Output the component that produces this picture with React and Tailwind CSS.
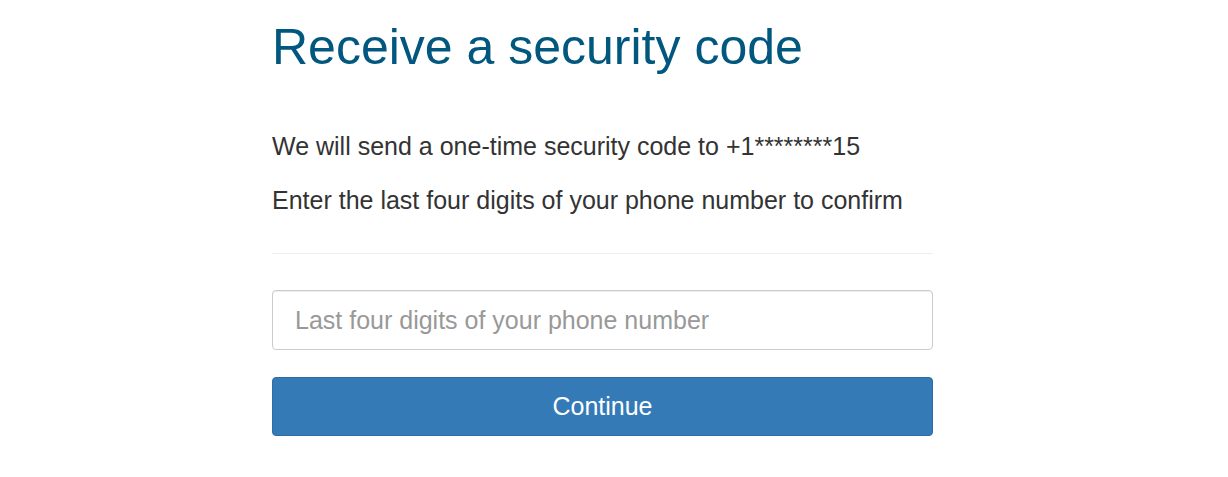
import React from 'react';

const App = () => {
  return (
    <div className="min-h-screen bg-white font-['Liberation_Sans',Arial,sans-serif]">
      <div className="ml-[272px] w-[661px] pt-[20px]">
        <h1 className="text-[50px] leading-[55px] text-[#02577f] font-normal">Receive a security code</h1>

        <div className="mt-[53px] text-[25px] leading-[36px] text-[#333333]">
          <p>We will send a one-time security code to +1********15</p>
          <p className="mt-[18px]">Enter the last four digits of your phone number to confirm</p>
        </div>

        <hr className="mt-[35px] border-0 border-t border-[#eeeeee]" />

        <form className="mt-[36px] flex flex-col gap-[27px]" onSubmit={(e) => e.preventDefault()}>
          <input
            type="text"
            placeholder="Last four digits of your phone number"
            className="h-[60px] w-full rounded-[4px] border border-[#cccccc] px-[22px] text-[25px] text-[#555] placeholder:text-[#999999] shadow-[inset_0_1px_1px_rgba(0,0,0,0.075)] outline-none"
          />
          <button
            type="submit"
            className="h-[59px] w-full rounded-[4px] border border-[#2e6da4] bg-[#337ab7] text-[25px] text-white"
          >
            Continue
          </button>
        </form>
      </div>
    </div>
  );
};

export default App;
